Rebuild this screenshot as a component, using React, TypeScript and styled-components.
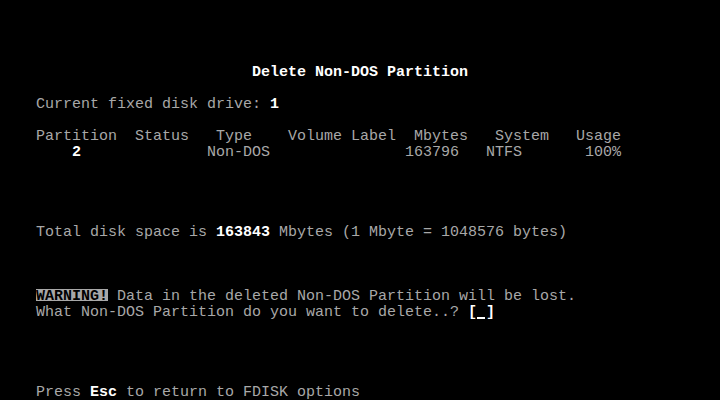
import styled, { createGlobalStyle } from "styled-components";

const GlobalStyle = createGlobalStyle`
  html, body {
    margin: 0;
    padding: 0;
    background: #000;
  }
`;

// 80x25 text mode, 9x16 cells
const Screen = styled.div`
  width: 720px;
  height: 400px;
  background: #000;
  display: flex;
  flex-direction: column;
  overflow: hidden;
  font-family: "Liberation Mono", "DejaVu Sans Mono", monospace;
  font-size: 15px;
  color: #a8a8a8;
`;

const Row = styled.div<{ $indent?: number }>`
  height: 16px;
  line-height: 18px;
  white-space: pre;
  padding-left: ${(p) => (p.$indent ?? 4) * 9}px;
`;

const Bright = styled.span`
  color: #ffffff;
  font-weight: bold;
`;

const Inverse = styled.span`
  color: #000;
  font-weight: bold;
  background: linear-gradient(
    to bottom,
    transparent 1.5px,
    #a8a8a8 1.5px,
    #a8a8a8 13.5px,
    transparent 13.5px
  );
`;

const Cursor = styled.span`
  display: inline-block;
  width: 9px;
  height: 16px;
  vertical-align: top;
  background: linear-gradient(
    to bottom,
    transparent 13px,
    #ffffff 13px,
    #ffffff 15px,
    transparent 15px
  );
  background-size: 8px 16px;
  background-repeat: no-repeat;
`;

const Blank = () => <Row />;

export default function App() {
  return (
    <>
      <GlobalStyle />
      <Screen>
        <Blank />
        <Blank />
        <Blank />
        <Blank />
        <Row $indent={28}>
          <Bright>Delete Non-DOS Partition</Bright>
        </Row>
        <Blank />
        <Row>
          Current fixed disk drive: <Bright>1</Bright>
        </Row>
        <Blank />
        <Row>
          {"Partition  Status   Type    Volume Label  Mbytes   System   Usage"}
        </Row>
        <Row>
          {"    "}
          <Bright>2</Bright>
          {"              Non-DOS               163796   NTFS       100%"}
        </Row>
        <Blank />
        <Blank />
        <Blank />
        <Blank />
        <Row>
          Total disk space is <Bright>163843</Bright> Mbytes (1 Mbyte = 1048576
          bytes)
        </Row>
        <Blank />
        <Blank />
        <Blank />
        <Row>
          <Inverse>WARNING!</Inverse> Data in the deleted Non-DOS Partition
          will be lost.
        </Row>
        <Row>
          {"What Non-DOS Partition do you want to delete..? "}
          <Bright>[</Bright>
          <Cursor />
          <Bright>]</Bright>
        </Row>
        <Blank />
        <Blank />
        <Blank />
        <Blank />
        <Row>
          Press <Bright>Esc</Bright> to return to FDISK options
        </Row>
      </Screen>
    </>
  );
}
